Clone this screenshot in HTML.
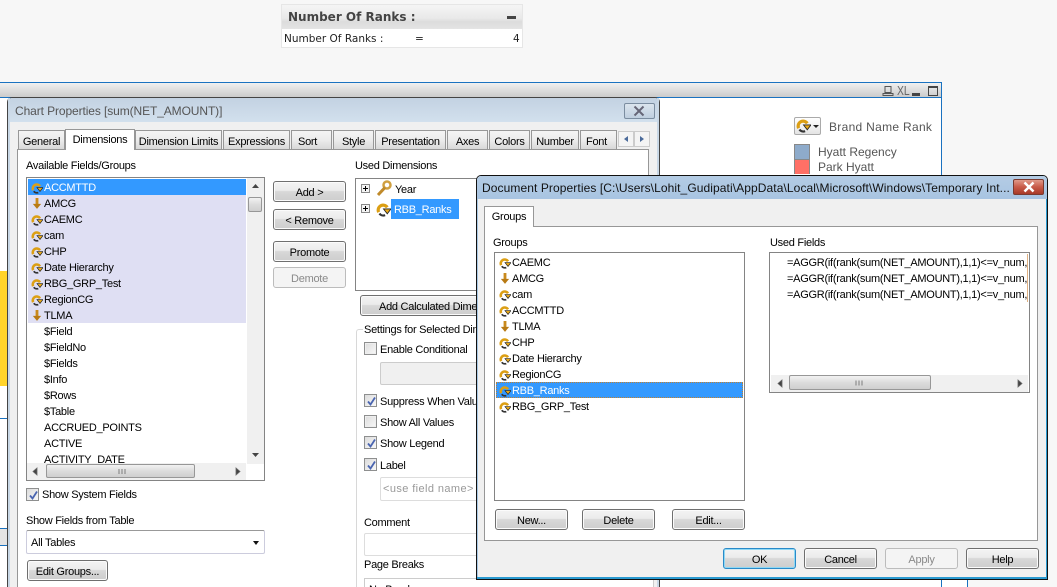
<!DOCTYPE html>
<html><head><meta charset="utf-8"><style>
html,body{margin:0;padding:0;width:1057px;height:587px;overflow:hidden;background:#f7f7f7}
body{position:relative;font:11px/16px "Liberation Sans",sans-serif;letter-spacing:-.27px;color:#000}
div,span.a,svg.a{position:absolute;box-sizing:border-box}
.t{white-space:nowrap;height:16px;line-height:18px}
.w{font-size:12px;letter-spacing:0;line-height:16px}
.dj{font-family:"DejaVu Sans",sans-serif;letter-spacing:0;color:#222;font-size:10.500px}
.b{border:1px solid #6f6f6f;border-radius:3px;background:linear-gradient(#f4f4f4 0,#ebebeb 45%,#d8d8d8 50%,#cdcdcd 100%);text-align:center;line-height:23px;width:73px;height:21px;box-shadow:inset 0 0 0 1px #fbfbfb;white-space:nowrap}
.d{border-color:#bcbcbc;background:#f4f4f4;color:#8a8a8a;box-shadow:none}
.tab{border:1px solid #979797;border-bottom:0;background:linear-gradient(#f4f4f4,#ececec 50%,#d8d8d8);height:19px;top:130px;text-align:center;line-height:22px;white-space:nowrap}
.cb{width:13px;height:13px;border:1px solid #8e8f8f;background:linear-gradient(135deg,#dcdcdc,#f8f8f8);box-shadow:inset 0 0 0 1px #eee}
.ck{width:13px;height:13px;border:1px solid #8e8f8f;background:linear-gradient(135deg,#dcdcdc,#f8f8f8)}
.ck svg{position:absolute;left:1px;top:1px}
.sb{background:#f0f0f0}
.th{background:linear-gradient(#f2f2f2,#dcdcdc 50%,#cfcfcf);border:1px solid #979797;border-radius:2px}
</style></head><body>
<svg width="0" height="0" style="position:absolute"><defs>
<symbol id="g" viewBox="0 0 14 14"><path d="M2.500 9.500A4.600 4.600 0 0 1 10.500 5" fill="none" stroke="#dc9f14" stroke-width="3"/><path d="M8.500 12.300A4.500 4.500 0 0 1 3.200 10.800" fill="none" stroke="#333" stroke-width="2"/><path d="M7 6.500h7L10.500 11z" fill="#e8a818" stroke="#222" stroke-width=".8"/></symbol>
<symbol id="f" viewBox="0 0 12 14"><path d="M6 1v8" stroke="#c98a1c" stroke-width="3.400"/><path d="M1 8h10l-5 6z" fill="#b87a14"/></symbol>
<symbol id="ch" viewBox="0 0 11 11"><path d="M2 5.500l2.500 3L9 1.500" fill="none" stroke="#4a65b0" stroke-width="1.800"/></symbol>
</defs></svg>

<!-- top widget -->
<div style="left:281px;top:4px;width:242px;height:44px;border:1px solid #e6e6e6;background:#fff"></div>
<div style="left:282px;top:5px;width:240px;height:24px;background:linear-gradient(#f5f5f5,#e9e9e9 55%,#dcdcdc 70%,#e4e4e4)"></div>
<div class="t dj" style="left:288px;top:8px;font-weight:bold;font-size:12px;color:#444">Number Of Ranks :</div>
<div style="left:507px;top:16px;width:9px;height:3px;background:#444"></div>
<div class="t dj" style="left:284px;top:30px">Number Of Ranks :</div>
<div class="t dj" style="left:415px;top:30px">=</div>
<div class="t dj" style="left:513px;top:30px">4</div>

<!-- chart window behind -->
<div style="left:0;top:82px;width:942px;height:505px;background:#fff;border-top:1px solid #1a72c0;border-right:1px solid #1a72c0"></div>
<div style="left:0;top:83px;width:941px;height:15px;background:linear-gradient(#f0f0f0,#dcdcdc 50%,#c8c8c8)"></div>
<div style="left:0;top:97px;width:941px;height:1px;background:#1a72c0"></div>
<div style="left:0;top:271px;width:8px;height:115px;background:#ffd42a"></div>
<div style="left:0;top:418px;width:8px;height:1px;background:#1a72c0"></div>
<div style="left:0;top:528px;width:8px;height:1px;background:#1a72c0"></div>
<div style="left:0;top:529px;width:8px;height:17px;background:#e4e4e4;border-bottom:1px solid #1a72c0"></div>
<div style="left:967px;top:578px;width:90px;height:9px;background:#f7f7f7;border-left:1px solid #1a72c0"></div>
<div style="left:942px;top:578px;width:25px;height:9px;background:#fff"></div>

<!-- chart window titlebar icons -->
<svg class="a" style="left:882px;top:85px" width="12" height="12"><path d="M3 1.500h6v6H3zM1 10.500h10v-2H1z" fill="none" stroke="#555"/></svg>
<div class="t" style="left:897px;top:83px;color:#666;transform:scaleX(.8);transform-origin:0 0;font-size:13px;letter-spacing:0;line-height:16px">XL</div>
<div style="left:912px;top:93px;width:8px;height:3px;background:#444"></div>
<div style="left:928px;top:86px;width:10px;height:10px;border:1px solid #444;border-top-width:2px"></div>

<!-- legend -->
<div style="left:794px;top:117px;width:27px;height:18px;border:1px solid #aaa;border-radius:2px;background:linear-gradient(#fff,#e4e4e4)"></div>
<svg class="a" style="left:796px;top:118px" width="15" height="15"><use href="#g"/></svg>
<div style="left:813px;top:125px;border:3px solid transparent;border-top:3px solid #222;border-bottom:0;width:0;height:0"></div>
<div class="t w" style="left:829px;top:119px;color:#555;letter-spacing:.3px">Brand Name Rank</div>
<div style="left:794px;top:144px;width:16px;height:15px;background:#8eabcb;border:1px solid #888;border-bottom:0"></div>
<div style="left:794px;top:159px;width:16px;height:15px;background:#ff7066;border:1px solid #888;border-bottom:0"></div>
<div class="t w" style="left:818px;top:144px;color:#555">Hyatt Regency</div>
<div class="t w" style="left:818px;top:159px;color:#555">Park Hyatt</div>

<!-- Chart Properties dialog -->
<div style="left:7px;top:97px;width:653px;height:490px;background:#f0f0f0;border:1px solid #444;border-bottom:0;border-radius:5px 5px 0 0"></div>
<div style="left:8px;top:98px;width:651px;height:24px;border-radius:4px 4px 0 0;background:linear-gradient(#c3d2e2,#d2e0ed)"></div>
<div style="left:8px;top:98px;width:2px;height:489px;background:#c9d8e6"></div>
<div style="left:657px;top:98px;width:2px;height:489px;background:#c9d8e6"></div>
<div class="t w" style="left:15px;top:103px;color:#555;letter-spacing:-.1px">Chart Properties [sum(NET_AMOUNT)]</div>
<div style="left:624px;top:103px;width:31px;height:16px;border:1px solid #7b8da0;border-radius:2px;background:linear-gradient(#dbe5ee,#bfcfdf)"></div>
<svg class="a" style="left:633px;top:105px" width="12" height="12"><path d="M1.500 1.500l9 9M10.500 1.500l-9 9" stroke="#667" stroke-width="2"/></svg>

<div style="left:17px;top:149px;width:632px;height:438px;background:#fff;border:1px solid #979797;border-bottom:0"></div>
<div class="tab" style="left:18px;width:47px">General</div>
<div class="tab" style="left:65px;top:129px;width:70px;height:21px;background:#fff;line-height:20px;z-index:2">Dimensions</div>
<div class="tab" style="left:135px;width:87px">Dimension Limits</div>
<div class="tab" style="left:223px;width:67px">Expressions</div>
<div class="tab" style="left:291px;width:41px;text-align:left;padding-left:6px">Sort</div>
<div class="tab" style="left:333px;width:41px">Style</div>
<div class="tab" style="left:375px;width:71px">Presentation</div>
<div class="tab" style="left:447px;width:41px">Axes</div>
<div class="tab" style="left:489px;width:41px">Colors</div>
<div class="tab" style="left:531px;width:48px">Number</div>
<div class="tab" style="left:580px;width:37px;text-align:left;padding-left:5px">Font</div>
<div style="left:618px;top:131px;width:16px;height:16px;background:#f4f4f4;border:1px solid #ccc"></div>
<div style="left:634px;top:131px;width:16px;height:16px;background:#f4f4f4;border:1px solid #ccc"></div>
<svg class="a" style="left:618px;top:131px" width="32" height="16"><path d="M10 5v6l-4-3zM22 5v6l4-3z" fill="#4a6a9a"/></svg>

<div class="t" style="left:26px;top:157px">Available Fields/Groups</div>
<div style="left:26px;top:177px;width:239px;height:304px;border:1px solid #848484;background:#fff"></div>
<div style="left:28px;top:179px;width:218px;height:16px;background:#3399ff"></div>
<div style="left:28px;top:195px;width:218px;height:128px;background:#dfdff3"></div>
<div style="left:27px;top:178px;width:237px;height:286px;overflow:hidden">
<svg class="a" style="left:4px;top:4px" width="12" height="12"><use href="#g"/></svg><div class="t" style="left:17px;top:1px;color:#fff">ACCMTTD</div>
<svg class="a" style="left:5px;top:19px" width="10" height="12"><use href="#f"/></svg><div class="t" style="left:17px;top:17px">AMCG</div>
<svg class="a" style="left:4px;top:36px" width="12" height="12"><use href="#g"/></svg><div class="t" style="left:17px;top:33px">CAEMC</div>
<svg class="a" style="left:4px;top:52px" width="12" height="12"><use href="#g"/></svg><div class="t" style="left:17px;top:49px">cam</div>
<svg class="a" style="left:4px;top:68px" width="12" height="12"><use href="#g"/></svg><div class="t" style="left:17px;top:65px">CHP</div>
<svg class="a" style="left:4px;top:84px" width="12" height="12"><use href="#g"/></svg><div class="t" style="left:17px;top:81px">Date Hierarchy</div>
<svg class="a" style="left:4px;top:100px" width="12" height="12"><use href="#g"/></svg><div class="t" style="left:17px;top:97px">RBG_GRP_Test</div>
<svg class="a" style="left:4px;top:116px" width="12" height="12"><use href="#g"/></svg><div class="t" style="left:17px;top:113px">RegionCG</div>
<svg class="a" style="left:5px;top:131px" width="10" height="12"><use href="#f"/></svg><div class="t" style="left:17px;top:129px">TLMA</div>
<div class="t" style="left:17px;top:145px">$Field</div>
<div class="t" style="left:17px;top:161px">$FieldNo</div>
<div class="t" style="left:17px;top:177px">$Fields</div>
<div class="t" style="left:17px;top:193px">$Info</div>
<div class="t" style="left:17px;top:209px">$Rows</div>
<div class="t" style="left:17px;top:225px">$Table</div>
<div class="t" style="left:17px;top:241px">ACCRUED_POINTS</div>
<div class="t" style="left:17px;top:257px">ACTIVE</div>
<div class="t" style="left:17px;top:273px;height:12px;overflow:hidden">ACTIVITY_DATE</div>
</div>
<div class="sb" style="left:247px;top:178px;width:17px;height:286px"></div>
<div class="th" style="left:248px;top:197px;width:14px;height:15px"></div>
<svg class="a" style="left:247px;top:178px" width="17" height="286"><path d="M5 10h7l-3.500-4zM5 275h7l-3.500 4z" fill="#444"/></svg>
<div class="sb" style="left:27px;top:463px;width:219px;height:17px"></div>
<div class="th" style="left:46px;top:464px;width:149px;height:14px"></div>
<svg class="a" style="left:27px;top:463px" width="219" height="17"><path d="M10 5v7l-4-3.500zM209 5v7l4-3.500zM92 6v5M95 6v5M98 6v5" fill="#444" stroke="#666" stroke-width=".8"/></svg>

<div class="ck" style="left:26px;top:488px"><svg width="11" height="11"><use href="#ch"/></svg></div>
<div class="t" style="left:42px;top:486px">Show System Fields</div>
<div class="t" style="left:26px;top:512px">Show Fields from Table</div>
<div style="left:26px;top:530px;width:239px;height:24px;border:1px solid #ccd;border-top-color:#999;border-radius:2px;background:#fff"></div>
<div class="t" style="left:31px;top:534px">All Tables</div>
<div style="left:253px;top:541px;border:3.500px solid transparent;border-top:4px solid #111;border-bottom:0;width:0;height:0"></div>
<div class="b" style="left:27px;top:560px;width:81px">Edit Groups...</div>

<div class="b" style="left:273px;top:181px">Add &gt;</div>
<div class="b" style="left:273px;top:209px">&lt; Remove</div>
<div class="b" style="left:273px;top:241px">Promote</div>
<div class="b d" style="left:273px;top:267px">Demote</div>

<div class="t" style="left:355px;top:157px">Used Dimensions</div>
<div style="left:355px;top:178px;width:200px;height:113px;border:1px solid #848484;border-right:0;background:#fff"></div>
<div style="left:361px;top:184px;width:9px;height:9px;border:1px solid #888;background:#f4f4f4"></div>
<div style="left:363px;top:188px;width:5px;height:1px;background:#000"></div><div style="left:365px;top:186px;width:1px;height:5px;background:#000"></div>
<div style="left:361px;top:204px;width:9px;height:9px;border:1px solid #888;background:#f4f4f4"></div>
<div style="left:363px;top:208px;width:5px;height:1px;background:#000"></div><div style="left:365px;top:206px;width:1px;height:5px;background:#000"></div>
<svg class="a" style="left:376px;top:180px" width="16" height="17"><circle cx="11" cy="5" r="3.500" fill="none" stroke="#d0a040" stroke-width="2.500"/><path d="M9 7.500L2 15" stroke="#c08a2a" stroke-width="3"/></svg>
<div class="t" style="left:395px;top:181px">Year</div>
<svg class="a" style="left:376px;top:202px" width="15" height="15"><use href="#g"/></svg>
<div style="left:391px;top:199px;width:68px;height:20px;background:#3399ff"></div>
<div class="t" style="left:394px;top:201px;color:#fff">RBB_Ranks</div>

<div class="b" style="left:360px;top:295px;width:190px;text-align:left;padding-left:18px">Add Calculated Dimension...</div>
<div style="left:356px;top:329px;width:200px;height:258px;border:1px solid #d8d8d8;border-right:0;border-bottom:0;border-radius:3px 0 0 0"></div>
<div class="t" style="left:363px;top:321px;background:#fff;padding:0 1px">Settings for Selected Dimension</div>
<div class="cb" style="left:364px;top:342px"></div><div class="t" style="left:380px;top:341px">Enable Conditional</div>
<div style="left:380px;top:362px;width:120px;height:23px;border:1px solid #ccc;border-radius:2px;background:#f0f0f0"></div>
<div class="ck" style="left:364px;top:394px"><svg width="11" height="11"><use href="#ch"/></svg></div><div class="t" style="left:380px;top:393px">Suppress When Value Is Null</div>
<div class="cb" style="left:364px;top:415px"></div><div class="t" style="left:380px;top:414px">Show All Values</div>
<div class="ck" style="left:364px;top:436px"><svg width="11" height="11"><use href="#ch"/></svg></div><div class="t" style="left:380px;top:435px">Show Legend</div>
<div class="ck" style="left:364px;top:458px"><svg width="11" height="11"><use href="#ch"/></svg></div><div class="t" style="left:380px;top:457px">Label</div>
<div style="left:380px;top:477px;width:120px;height:24px;border:1px solid #ddd;border-radius:2px;background:#fff"></div>
<div class="t" style="left:383px;top:480px;color:#999;letter-spacing:.4px">&lt;use field name&gt;</div>
<div class="t" style="left:364px;top:514px">Comment</div>
<div style="left:364px;top:533px;width:140px;height:23px;border:1px solid #ddd;border-radius:2px;background:#fff"></div>
<div class="t" style="left:364px;top:556px">Page Breaks</div>
<div style="left:364px;top:578px;width:290px;height:12px;border:1px solid #ccc;background:#fff"></div>
<div class="t" style="left:369px;top:581px">No Breaks</div>

<!-- Document Properties dialog -->
<div style="left:476px;top:175px;width:572px;height:405px;background:#f0f0f0;border:1px solid #111;border-radius:5px 5px 0 0"></div>
<div style="left:477px;top:176px;width:570px;height:23px;border-radius:4px 4px 0 0;background:linear-gradient(#b4cce4,#a8c4e2)"></div>
<div style="left:477px;top:199px;width:1px;height:380px;background:#a8c8e4"></div>
<div style="left:1046px;top:199px;width:1px;height:380px;background:#2a9ad0"></div>
<div style="left:477px;top:577px;width:570px;height:2px;background:#2a9ad0"></div>
<div class="t w" style="left:482px;top:180px;color:#111;letter-spacing:.09px">Document Properties [C:\Users\Lohit_Gudipati\AppData\Local\Microsoft\Windows\Temporary Int...</div>
<div style="left:1013px;top:179px;width:31px;height:16px;border:1px solid #7a3a30;border-radius:2px;background:linear-gradient(#e09a8a,#c85a48 50%,#a83a28)"></div>
<svg class="a" style="left:1023px;top:181px" width="12" height="12"><path d="M1.500 1.500l9 9M10.500 1.500l-9 9" stroke="#fff" stroke-width="2.500"/></svg>

<div style="left:484px;top:226px;width:554px;height:315px;background:#fff;border:1px solid #979797"></div>
<div style="left:484px;top:206px;width:50px;height:21px;background:#fff;border:1px solid #979797;border-bottom:0;text-align:center;line-height:20px">Groups</div>

<div class="t" style="left:493px;top:234px">Groups</div>
<div style="left:494px;top:252px;width:251px;height:249px;border:1px solid #848484;background:#fff"></div>
<div style="left:496px;top:382px;width:247px;height:16px;background:#3399ff;outline:1px dotted #c08030;outline-offset:-1px"></div>
<svg class="a" style="left:499px;top:257px" width="12" height="12"><use href="#g"/></svg><div class="t" style="left:512px;top:254px">CAEMC</div>
<svg class="a" style="left:500px;top:272px" width="10" height="12"><use href="#f"/></svg><div class="t" style="left:512px;top:270px">AMCG</div>
<svg class="a" style="left:499px;top:289px" width="12" height="12"><use href="#g"/></svg><div class="t" style="left:512px;top:286px">cam</div>
<svg class="a" style="left:499px;top:305px" width="12" height="12"><use href="#g"/></svg><div class="t" style="left:512px;top:302px">ACCMTTD</div>
<svg class="a" style="left:500px;top:320px" width="10" height="12"><use href="#f"/></svg><div class="t" style="left:512px;top:318px">TLMA</div>
<svg class="a" style="left:499px;top:337px" width="12" height="12"><use href="#g"/></svg><div class="t" style="left:512px;top:334px">CHP</div>
<svg class="a" style="left:499px;top:353px" width="12" height="12"><use href="#g"/></svg><div class="t" style="left:512px;top:350px">Date Hierarchy</div>
<svg class="a" style="left:499px;top:369px" width="12" height="12"><use href="#g"/></svg><div class="t" style="left:512px;top:366px">RegionCG</div>
<svg class="a" style="left:499px;top:385px" width="12" height="12"><use href="#g"/></svg><div class="t" style="left:512px;top:382px;color:#fff">RBB_Ranks</div>
<svg class="a" style="left:499px;top:401px" width="12" height="12"><use href="#g"/></svg><div class="t" style="left:512px;top:398px">RBG_GRP_Test</div>

<div class="t" style="left:770px;top:234px">Used Fields</div>
<div style="left:769px;top:252px;width:261px;height:141px;border:1px solid #848484;background:#fff"></div>
<div style="left:771px;top:254px;width:257px;height:120px;overflow:hidden">
<div class="t" style="left:16px;top:0">=AGGR(if(rank(sum(NET_AMOUNT),1,1)&lt;=v_num,</div>
<div class="t" style="left:16px;top:16px">=AGGR(if(rank(sum(NET_AMOUNT),1,1)&lt;=v_num,</div>
<div class="t" style="left:16px;top:32px">=AGGR(if(rank(sum(NET_AMOUNT),1,1)&lt;=v_num,</div>
</div>
<div style="left:1027px;top:254px;width:1px;height:48px;background:#e0b080"></div>
<div class="sb" style="left:771px;top:375px;width:257px;height:17px"></div>
<div class="th" style="left:789px;top:375px;width:142px;height:15px"></div>
<svg class="a" style="left:771px;top:375px" width="257" height="17"><path d="M11 5v7l-4-3.500zM247 5v7l4-3.500zM85 5.500v5M88 5.500v5M91 5.500v5" fill="#444" stroke="#666" stroke-width=".8"/></svg>

<div class="b" style="left:495px;top:509px">New...</div>
<div class="b" style="left:582px;top:509px">Delete</div>
<div class="b" style="left:672px;top:509px">Edit...</div>
<div class="b" style="left:723px;top:548px;border-color:#2a8ac8;box-shadow:inset 0 0 0 1px #8fd8f4">OK</div>
<div class="b" style="left:804px;top:548px">Cancel</div>
<div class="b d" style="left:885px;top:548px">Apply</div>
<div class="b" style="left:966px;top:548px">Help</div>
</body></html>
